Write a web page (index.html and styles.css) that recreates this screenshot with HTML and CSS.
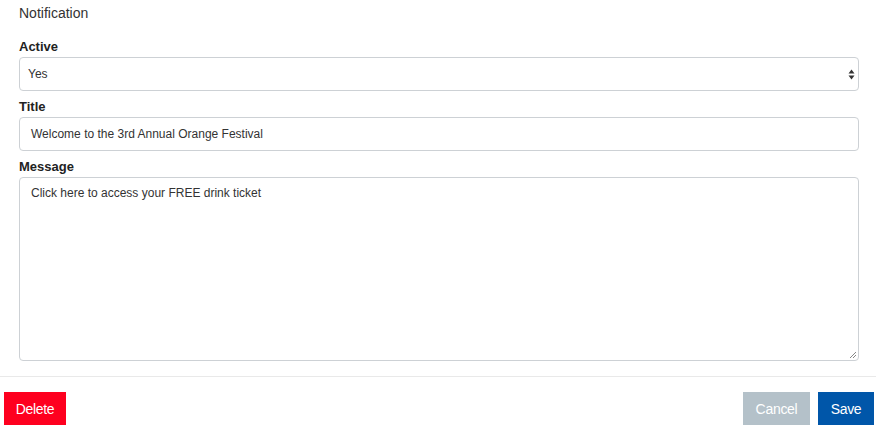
FILE: index.html
```html
<!DOCTYPE html>
<html>
<head>
<meta charset="utf-8">
<link rel="stylesheet" href="styles.css">
</head>
<body>
<div class="modal">
  <div class="modal-body">
    <h4 class="heading">Notification</h4>
    <div class="field">
      <label class="label">Active</label>
      <div class="select">
        <span>Yes</span>
        <svg class="arrows" width="7" height="11" viewBox="0 0 7 11"><path d="M3.5 0.5 L6.5 4.5 H0.5 Z M3.5 10.5 L6.5 6.5 H0.5 Z" fill="#333"/></svg>
      </div>
    </div>
    <div class="field">
      <label class="label">Title</label>
      <div class="input">Welcome to the 3rd Annual Orange Festival</div>
    </div>
    <div class="field">
      <label class="label">Message</label>
      <div class="input textarea">Click here to access your FREE drink ticket
        <svg class="grip" width="8" height="8" viewBox="0 0 8 8"><path d="M7 1 L1 7 M7 4 L4 7" stroke="#888" stroke-width="1"/></svg>
      </div>
    </div>
  </div>
  <div class="modal-footer">
    <button class="btn btn-delete">Delete</button>
    <div class="right">
      <button class="btn btn-cancel">Cancel</button>
      <button class="btn btn-save">Save</button>
    </div>
  </div>
</div>
</body>
</html>
```
FILE: styles.css
```css
* { box-sizing: border-box; }
html, body { margin: 0; padding: 0; background: #fff; }
body {
  font-family: "Liberation Sans", Arial, Helvetica, sans-serif;
  color: #333;
  font-size: 13px;
}
.modal { width: 876px; }
.modal-body {
  padding: 5px 17px 15px 19px;
  border-bottom: 1px solid #e9e9e9;
}
.heading {
  margin: 0 0 17px;
  font-size: 14px;
  font-weight: normal;
  line-height: 17px;
  color: #333;
}
.field { margin-bottom: 8px; }
.field:last-child { margin-bottom: 0; }
.label {
  display: block;
  font-weight: bold;
  font-size: 13px;
  line-height: 16px;
  margin-bottom: 2px;
  color: #222;
}
.select, .input {
  height: 34px;
  border: 1px solid #cdd1d5;
  border-radius: 4px;
  padding: 0 11px;
  display: flex;
  align-items: center;
  font-size: 12px;
  color: #333;
}
.select { justify-content: space-between; padding-left: 8px; padding-right: 3px; }
.arrows { display: block; }
.textarea {
  height: 184px;
  align-items: flex-start;
  padding-top: 8px;
  position: relative;
  padding-left: 11px;
}
.grip { position: absolute; right: 1px; bottom: 1px; }
.modal-footer {
  display: flex;
  justify-content: space-between;
  padding: 15px 2px 15px 4px;
}
.right { display: flex; gap: 8px; }
.btn {
  border: none;
  border-radius: 0;
  height: 33px;
  padding: 0;
  font-family: "Liberation Sans", Arial, Helvetica, sans-serif;
  font-size: 14px;
  letter-spacing: -0.3px;
  color: #fff;
}
.btn-delete { background: #fe001f; width: 62px; }
.btn-cancel { background: #b4c1c9; width: 67px; }
.btn-save { background: #0056a9; width: 56px; }
```
